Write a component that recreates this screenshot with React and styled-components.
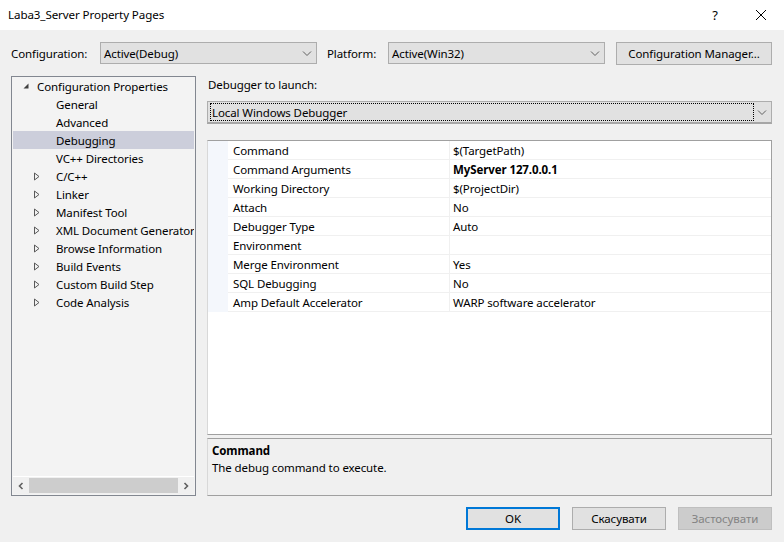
import React from 'react';
import styled, { createGlobalStyle } from 'styled-components';

const Global = createGlobalStyle`
  html, body {
    margin: 0;
    padding: 0;
    background: #f0f0f0;
    overflow: hidden;
  }
  body {
    font-family: "Segoe UI", "Noto Sans", "Liberation Sans", sans-serif;
    font-size: 11.5px;
    letter-spacing: -0.1px;
    color: #000;
  }
`;

const Window = styled.div`
  width: 784px;
  height: 542px;
  display: flex;
  flex-direction: column;
  background: #f0f0f0;
`;

const TitleBar = styled.div`
  height: 30px;
  background: #fff;
  display: flex;
  align-items: center;
  padding-left: 8px;
  .caption {
    flex: 1;
    font-size: 11.6px;
    margin-top: -1px;
  }
`;

const TitleButton = styled.div`
  width: 46px;
  height: 30px;
  display: flex;
  align-items: center;
  justify-content: center;
  font-size: 13px;
`;

const Body = styled.div`
  flex: 1;
  display: flex;
  flex-direction: column;
  padding: 12px 12px 0 11px;
`;

const ConfigRow = styled.div`
  display: flex;
  align-items: center;
  height: 22px;
`;

const Label = styled.span`
  width: ${p => p.$w}px;
  flex-shrink: 0;
`;

const Combo = styled.div`
  width: ${p => p.$w}px;
  height: 22px;
  box-sizing: border-box;
  border: 1px solid #adadad;
  background: #e1e1e1;
  display: flex;
  align-items: center;
  padding-left: 3px;
  margin-right: ${p => p.$mr || 0}px;
  .text {
    flex: 1;
  }
`;

const Chevron = () => (
  <svg width="17" height="20" viewBox="0 0 17 20">
    <path d="M4 8.5 L8 12.5 L12 8.5" fill="none" stroke="#606060" strokeWidth="1" />
  </svg>
);

const Button = styled.div`
  width: ${p => p.$w || 94}px;
  height: 23px;
  box-sizing: border-box;
  border: ${p => (p.$default ? '2px solid #0078d7' : '1px solid #adadad')};
  background: ${p => (p.$disabled ? '#cccccc' : '#e1e1e1')};
  color: ${p => (p.$disabled ? '#838383' : '#000')};
  border-color: ${p => (p.$disabled ? '#bfbfbf' : p.$default ? '#0078d7' : '#adadad')};
  display: flex;
  align-items: center;
  justify-content: center;
`;

const Main = styled.div`
  display: flex;
  margin-top: 12px;
  height: 420px;
`;

const Tree = styled.div`
  width: 185px;
  box-sizing: border-box;
  border: 1px solid #828790;
  background: #f3f3f3;
  display: flex;
  flex-direction: column;
  padding: 0 1px;
`;

const TreeList = styled.div`
  flex: 1;
  overflow: hidden;
`;

const TreeRow = styled.div`
  height: 18px;
  display: flex;
  align-items: center;
  white-space: nowrap;
  padding-left: ${p => (p.$top ? 9 : 20)}px;
  background: ${p => (p.$selected ? '#cccedb' : 'transparent')};
`;

const Expander = styled.span`
  width: ${p => (p.$top ? 15 : 23)}px;
  display: inline-flex;
  align-items: center;
  flex-shrink: 0;
`;

const Collapsed = () => (
  <svg width="9" height="9" viewBox="0 0 9 9">
    <path d="M1.5 1 L6 4.5 L1.5 8 Z" fill="none" stroke="#595959" strokeWidth="1" />
  </svg>
);

const Expanded = () => (
  <svg width="9" height="9" viewBox="0 0 9 9">
    <path d="M6.5 1.5 L6.5 6.5 L1.5 6.5 Z" fill="#404040" />
  </svg>
);

const HScroll = styled.div`
  height: 17px;
  display: flex;
  align-items: center;
  background: #f0f0f0;
  border-top: 1px solid #fff;
  margin-bottom: 1px;
`;

const ScrollArrow = styled.div`
  width: 16px;
  height: 17px;
  display: flex;
  align-items: center;
  justify-content: center;
`;

const Thumb = styled.div`
  flex: 1;
  height: 15px;
  background: #cdcdcd;
`;

const Right = styled.div`
  flex: 1;
  margin-left: 11px;
  display: flex;
  flex-direction: column;
`;

const SectionLabel = styled.div`
  height: 18px;
  line-height: 18px;
  padding-left: 1px;
`;

const Launcher = styled.div`
  margin-top: 7px;
  height: 23px;
  box-sizing: border-box;
  border: 1px solid #adadad;
  border-bottom: 2px solid #a6a6a6;
  background: #e1e1e1;
  display: flex;
  align-items: center;
  padding: 1px 0 1px 2px;
`;

const Focus = styled.div`
  flex: 1;
  height: 100%;
  box-sizing: border-box;
  border: 1px dotted #000;
  display: flex;
  align-items: center;
  padding-left: 1px;
`;

const Grid = styled.div`
  margin-top: 16px;
  height: 295px;
  box-sizing: border-box;
  border: 1px solid #a0a0a0;
  border-left-color: #d8d8d8;
  background: #fff;
`;

const GridRow = styled.div`
  display: flex;
  height: 19px;
`;

const Margin = styled.div`
  width: 20px;
  background: #f4f7fc;
  flex-shrink: 0;
`;

const Cell = styled.div`
  box-sizing: border-box;
  width: ${p => p.$w}px;
  flex: ${p => (p.$w ? 'none' : 1)};
  border-bottom: 1px solid #f0f0f0;
  border-right: ${p => (p.$w ? '1px solid #f0f0f0' : 'none')};
  padding-left: ${p => (p.$w ? 5 : 3)}px;
  line-height: 19px;
  font-weight: ${p => (p.$bold ? 700 : 400)};
  white-space: nowrap;
`;

const Description = styled.div`
  margin-top: 3px;
  height: 58px;
  box-sizing: border-box;
  border: 1px solid #a0a0a0;
  border-left-color: #d8d8d8;
  padding: 3px 0 0 4px;
  .title {
    font-weight: 700;
    line-height: 17px;
  }
  .text {
    line-height: 17px;
  }
`;

const Footer = styled.div`
  display: flex;
  justify-content: flex-end;
  gap: 12px;
  margin-top: 11px;
`;

const tree = [
  { label: 'Configuration Properties', top: true },
  { label: 'General' },
  { label: 'Advanced' },
  { label: 'Debugging', selected: true },
  { label: 'VC++ Directories' },
  { label: 'C/C++', expand: true },
  { label: 'Linker', expand: true },
  { label: 'Manifest Tool', expand: true },
  { label: 'XML Document Generator', expand: true },
  { label: 'Browse Information', expand: true },
  { label: 'Build Events', expand: true },
  { label: 'Custom Build Step', expand: true },
  { label: 'Code Analysis', expand: true },
];

const props = [
  ['Command', '$(TargetPath)'],
  ['Command Arguments', 'MyServer 127.0.0.1', true],
  ['Working Directory', '$(ProjectDir)'],
  ['Attach', 'No'],
  ['Debugger Type', 'Auto'],
  ['Environment', ''],
  ['Merge Environment', 'Yes'],
  ['SQL Debugging', 'No'],
  ['Amp Default Accelerator', 'WARP software accelerator'],
];

export default function App() {
  return (
    <Window>
      <Global />
      <TitleBar>
        <span className="caption">Laba3_Server Property Pages</span>
        <TitleButton>?</TitleButton>
        <TitleButton>
          <svg width="12" height="12" viewBox="0 0 12 12">
            <path d="M1 1 L11 11 M11 1 L1 11" stroke="#000" strokeWidth="1" />
          </svg>
        </TitleButton>
      </TitleBar>
      <Body>
        <ConfigRow>
          <Label $w={89}>Configuration:</Label>
          <Combo $w={217} $mr={10}>
            <span className="text">Active(Debug)</span>
            <Chevron />
          </Combo>
          <Label $w={61}>Platform:</Label>
          <Combo $w={217} $mr={11}>
            <span className="text">Active(Win32)</span>
            <Chevron />
          </Combo>
          <Button $w={156}>Configuration Manager...</Button>
        </ConfigRow>
        <Main>
          <Tree>
            <TreeList>
              {tree.map(item => (
                <TreeRow key={item.label} $top={item.top} $selected={item.selected}>
                  <Expander $top={item.top}>
                    {item.top ? <Expanded /> : item.expand ? <Collapsed /> : null}
                  </Expander>
                  <span>{item.label}</span>
                </TreeRow>
              ))}
            </TreeList>
            <HScroll>
              <ScrollArrow>
                <svg width="8" height="8" viewBox="0 0 8 8">
                  <path d="M5.5 1 L2.5 4 L5.5 7" fill="none" stroke="#606060" strokeWidth="1.6" />
                </svg>
              </ScrollArrow>
              <Thumb />
              <ScrollArrow>
                <svg width="8" height="8" viewBox="0 0 8 8">
                  <path d="M2.5 1 L5.5 4 L2.5 7" fill="none" stroke="#606060" strokeWidth="1.6" />
                </svg>
              </ScrollArrow>
            </HScroll>
          </Tree>
          <Right>
            <SectionLabel>Debugger to launch:</SectionLabel>
            <Launcher>
              <Focus>Local Windows Debugger</Focus>
              <Chevron />
            </Launcher>
            <Grid>
              {props.map(([name, value, bold]) => (
                <GridRow key={name}>
                  <Margin />
                  <Cell $w={222}>{name}</Cell>
                  <Cell $bold={bold}>{value}</Cell>
                </GridRow>
              ))}
            </Grid>
            <Description>
              <div className="title">Command</div>
              <div className="text">The debug command to execute.</div>
            </Description>
          </Right>
        </Main>
        <Footer>
          <Button $default>OK</Button>
          <Button>Скасувати</Button>
          <Button $disabled>Застосувати</Button>
        </Footer>
      </Body>
    </Window>
  );
}
